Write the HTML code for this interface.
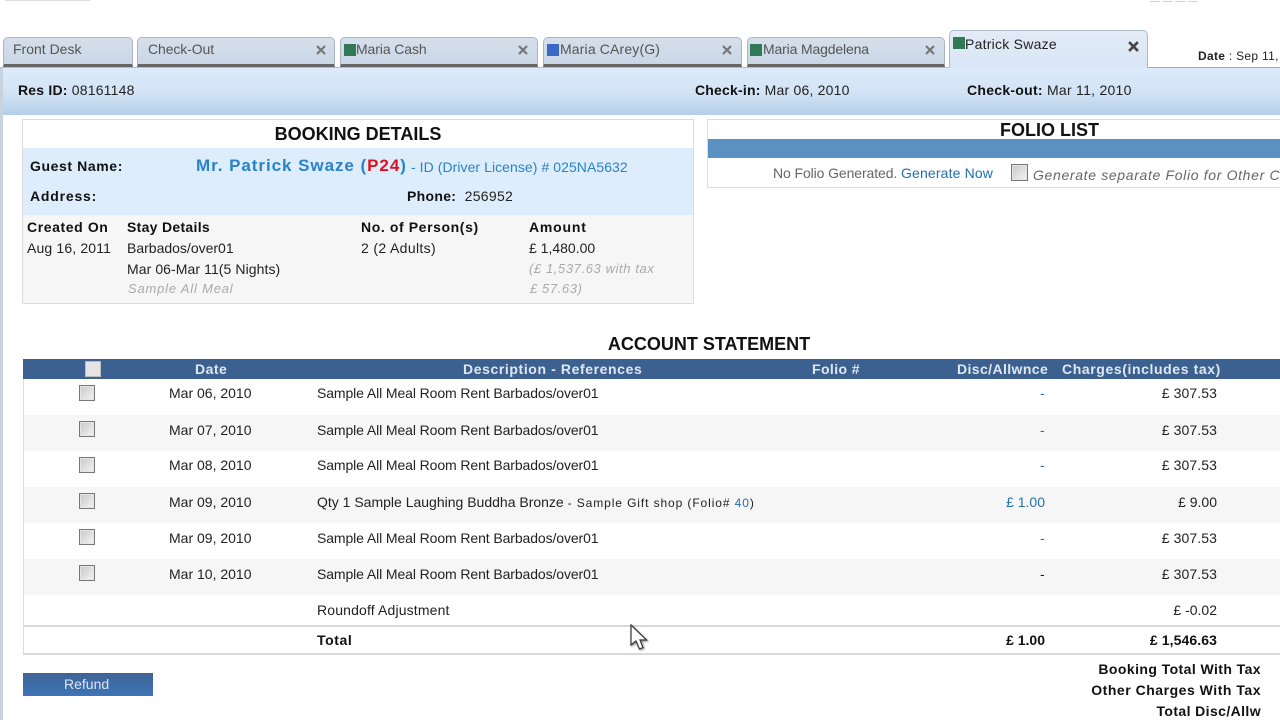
<!DOCTYPE html>
<html><head><meta charset="utf-8"><style>
html,body{margin:0;padding:0;width:1280px;height:720px;overflow:hidden;background:#fff;font-family:"Liberation Sans",sans-serif;font-size:14px;color:#222}
.a{position:absolute;white-space:nowrap;line-height:16px}
.r{text-align:right}
.c{text-align:center}
b,.b{font-weight:bold;color:#111}
.tab{position:absolute;top:37px;height:30px;box-sizing:border-box;border:1px solid #aab4c2;border-bottom:3px solid #666;border-radius:5px 5px 0 0;background:linear-gradient(#d6e0ec,#cad6e6);color:#555}
.tab span{position:absolute;top:3px;white-space:nowrap;line-height:16px}
.x{position:absolute;top:7px;width:10px;height:10px}
.sq{position:absolute;top:6px;left:3px;width:12px;height:12px;background:#2f7a55}
.cb{position:absolute;width:16px;height:16px;box-sizing:border-box;border:1px solid #777;background:linear-gradient(135deg,#c8c8c8,#f4f4f4);box-shadow:inset 0 0 0 1px #e4e4e4}
.row{position:absolute;left:23px;width:1257px;height:36px}
.g{background:#f6f6f6}
.bl{color:#1f6fae}
.h{font-weight:bold;color:#dfe8f2}
.t{letter-spacing:-.1px}
.i{font-size:13px;font-style:italic;color:#aaa;letter-spacing:.6px}
</style></head><body>
<div class="a" style="left:5px;top:0;width:85px;height:1px;background:#ddd"></div>
<div class="a" style="left:1150px;top:0;color:#bbb;font-size:10px;line-height:3px;height:3px;overflow:hidden">&#8212; &#8212; &#8212; &#8212;</div>

<div class="tab" style="left:3px;width:130px"><span style="left:9px">Front Desk</span></div>
<div class="tab" style="left:137px;width:198px"><span style="left:10px;letter-spacing:-.1px">Check-Out</span><svg class="x" style="left:178px" viewBox="0 0 10 10"><path d="M1 1L9 9M9 1L1 9" stroke="#777" stroke-width="2.2"/></svg></div>
<div class="tab" style="left:340px;width:198px"><i class="sq" style="left:3px"></i><span style="left:15px;letter-spacing:-.1px">Maria Cash</span><svg class="x" style="left:177px" viewBox="0 0 10 10"><path d="M1 1L9 9M9 1L1 9" stroke="#777" stroke-width="2.2"/></svg></div>
<div class="tab" style="left:543px;width:199px"><i class="sq" style="left:3px;background:#3a68c8"></i><span style="left:16px;letter-spacing:.15px">Maria CArey(G)</span><svg class="x" style="left:178px" viewBox="0 0 10 10"><path d="M1 1L9 9M9 1L1 9" stroke="#777" stroke-width="2.2"/></svg></div>
<div class="tab" style="left:747px;width:198px"><i class="sq" style="left:2px"></i><span style="left:15px;letter-spacing:-.15px">Maria Magdelena</span><svg class="x" style="left:177px" viewBox="0 0 10 10"><path d="M1 1L9 9M9 1L1 9" stroke="#777" stroke-width="2.2"/></svg></div>
<div class="a" style="left:0;top:67px;width:950px;height:1px;background:#bbb"></div>
<div class="a" style="left:1148px;top:67px;width:132px;height:1px;background:#aaa"></div>
<div class="a" style="left:949px;top:30px;width:199px;height:38px;box-sizing:border-box;border:1px solid #b0bac6;border-bottom:0;border-radius:5px 5px 0 0;background:linear-gradient(#e2ebf6,#d9e6f6)">
<i class="sq" style="top:6px;left:3px"></i><span class="a" style="left:15px;top:5px;color:#222;letter-spacing:.25px">Patrick Swaze</span>
<svg class="x" style="left:178px;top:10px;width:11px;height:11px" viewBox="0 0 10 10"><path d="M1 1L9 9M9 1L1 9" stroke="#444" stroke-width="2.4"/></svg></div>
<div class="a" style="left:1198px;top:48px;font-size:12px;letter-spacing:.3px"><b style="color:#222">Date</b> : Sep 11,</div>

<div class="a" style="left:0;top:68px;width:3px;height:652px;background:#c9d3df"></div>
<div class="a" style="left:3px;top:68px;width:1277px;height:47px;background:linear-gradient(#dceafa,#d4e4f6 50%,#b4cfe8)"></div>
<div class="a" style="left:18px;top:82px;letter-spacing:.2px"><b>Res ID:</b> 08161148</div>
<div class="a" style="left:695px;top:82px;letter-spacing:.2px"><b>Check-in:</b> Mar 06, 2010</div>
<div class="a" style="left:967px;top:82px;letter-spacing:.27px"><b>Check-out:</b> Mar 11, 2010</div>

<div class="a" style="left:22px;top:119px;width:672px;height:185px;box-sizing:border-box;border:1px solid #dcdcdc;background:#fff"></div>
<div class="a" style="left:23px;top:148px;width:670px;height:67px;background:#ddedfb"></div>
<div class="a" style="left:23px;top:215px;width:670px;height:88px;background:#f6f6f6"></div>
<div class="a c" style="left:23px;top:124px;width:670px;font-size:18px;font-weight:bold;color:#111;line-height:20px">BOOKING DETAILS</div>
<div class="a" style="left:30px;top:158px;letter-spacing:.6px"><b>Guest Name:</b></div>
<div class="a" style="left:196px;top:156px;font-size:17px;line-height:20px;font-weight:bold;letter-spacing:.95px;color:#2a82c9">Mr. Patrick Swaze (<span style="color:#e01020">P24</span>)</div>
<div class="a" style="left:411px;top:159px;color:#2a82c9;letter-spacing:.06px">- ID (Driver License) # 025NA5632</div>
<div class="a" style="left:30px;top:188px;letter-spacing:.8px"><b>Address:</b></div>
<div class="a" style="left:407px;top:188px;letter-spacing:.3px"><b>Phone:</b>&nbsp; 256952</div>
<div class="a" style="left:27px;top:219px;letter-spacing:.6px"><b>Created On</b></div>
<div class="a" style="left:127px;top:219px;letter-spacing:.3px"><b>Stay Details</b></div>
<div class="a" style="left:361px;top:219px;letter-spacing:.6px"><b>No. of Person(s)</b></div>
<div class="a" style="left:529px;top:219px;letter-spacing:.8px"><b>Amount</b></div>
<div class="a" style="left:27px;top:240px;letter-spacing:.15px">Aug 16, 2011</div>
<div class="a" style="left:127px;top:240px">Barbados/over01</div>
<div class="a" style="left:361px;top:240px;letter-spacing:.35px">2 (2 Adults)</div>
<div class="a" style="left:529px;top:240px">£ 1,480.00</div>
<div class="a" style="left:127px;top:261px;letter-spacing:.08px">Mar 06-Mar 11(5 Nights)</div>
<div class="a i" style="left:529px;top:261px">(£ 1,537.63 with tax</div>
<div class="a i" style="left:128px;top:281px;letter-spacing:.8px">Sample All Meal</div>
<div class="a i" style="left:530px;top:281px">£ 57.63)</div>

<div class="a" style="left:707px;top:119px;width:573px;height:69px;box-sizing:border-box;border:1px solid #dcdcdc;border-right:0;background:#fff"></div>
<div class="a" style="left:708px;top:139px;width:572px;height:19px;background:#5b91c1"></div>
<div class="a" style="left:1000px;top:121px;font-size:18px;line-height:19px;font-weight:bold;color:#111">FOLIO LIST</div>
<div class="a" style="left:773px;top:165px;color:#666;letter-spacing:-.1px">No Folio Generated.</div>
<div class="a bl" style="left:901px;top:165px;letter-spacing:.15px">Generate Now</div>
<div class="cb" style="left:1011px;top:164px;width:17px;height:17px"></div>
<div class="a" style="left:1033px;top:167px;font-style:italic;letter-spacing:.66px;color:#666">Generate separate Folio for Other Charges</div>

<div class="a c" style="left:23px;top:334px;width:1372px;font-size:18px;font-weight:bold;color:#111;line-height:20px">ACCOUNT STATEMENT</div>
<div class="a" style="left:23px;top:359px;width:1257px;height:20px;background:#3c6190"></div>
<div class="cb" style="left:85px;top:361px;border-color:#bbb;background:#e4e4e4"></div>
<div class="a h" style="left:195px;top:361px;letter-spacing:.5px">Date</div>
<div class="a h" style="left:463px;top:361px;letter-spacing:.6px">Description - References</div>
<div class="a h" style="left:812px;top:361px;letter-spacing:.4px">Folio #</div>
<div class="a h" style="left:957px;top:361px;letter-spacing:.4px">Disc/Allwnce</div>
<div class="a h" style="left:1062px;top:361px;letter-spacing:.6px">Charges(includes tax)</div>

<div class="row g" style="top:415px"></div>
<div class="row g" style="top:487px"></div>
<div class="row g" style="top:559px"></div>

<div class="cb" style="left:79px;top:385px"></div><div class="a" style="left:169px;top:385px">Mar 06, 2010</div><div class="a t" style="left:317px;top:385px">Sample All Meal Room Rent Barbados/over01</div><div class="a bl" style="left:1040px;top:385px">-</div><div class="a r" style="right:63px;top:385px;letter-spacing:.1px">£ 307.53</div>
<div class="cb" style="left:79px;top:421px"></div><div class="a" style="left:169px;top:422px">Mar 07, 2010</div><div class="a t" style="left:317px;top:422px">Sample All Meal Room Rent Barbados/over01</div><div class="a bl" style="left:1040px;top:422px">-</div><div class="a r" style="right:63px;top:422px;letter-spacing:.1px">£ 307.53</div>
<div class="cb" style="left:79px;top:457px"></div><div class="a" style="left:169px;top:457px">Mar 08, 2010</div><div class="a t" style="left:317px;top:457px">Sample All Meal Room Rent Barbados/over01</div><div class="a bl" style="left:1040px;top:457px">-</div><div class="a r" style="right:63px;top:457px;letter-spacing:.1px">£ 307.53</div>
<div class="cb" style="left:79px;top:493px"></div><div class="a" style="left:169px;top:494px">Mar 09, 2010</div><div class="a" style="left:317px;top:494px">Qty 1 Sample Laughing Buddha Bronze <span style="font-size:12px;letter-spacing:.9px">- Sample Gift shop (Folio# <span class="bl">40</span>)</span></div><div class="a bl r" style="right:235px;top:494px">£ 1.00</div><div class="a r" style="right:63px;top:494px">£ 9.00</div>
<div class="cb" style="left:79px;top:529px"></div><div class="a" style="left:169px;top:530px">Mar 09, 2010</div><div class="a t" style="left:317px;top:530px">Sample All Meal Room Rent Barbados/over01</div><div class="a bl" style="left:1040px;top:530px">-</div><div class="a r" style="right:63px;top:530px;letter-spacing:.1px">£ 307.53</div>
<div class="cb" style="left:79px;top:565px"></div><div class="a" style="left:169px;top:566px">Mar 10, 2010</div><div class="a t" style="left:317px;top:566px">Sample All Meal Room Rent Barbados/over01</div><div class="a" style="left:1040px;top:566px">-</div><div class="a r" style="right:63px;top:566px;letter-spacing:.1px">£ 307.53</div>
<div class="a" style="left:317px;top:602px;letter-spacing:.15px">Roundoff Adjustment</div><div class="a r" style="right:63px;top:602px">£ -0.02</div>

<div class="a" style="left:23px;top:379px;width:1px;height:275px;background:#ddd"></div>
<div class="a" style="left:23px;top:625px;width:1257px;height:2px;background:#d8d8d8"></div>
<div class="a" style="left:23px;top:653px;width:1257px;height:2px;background:#d8d8d8"></div>
<div class="a" style="left:317px;top:632px;letter-spacing:.6px"><b>Total</b></div>
<div class="a r" style="right:235px;top:632px"><b>£ 1.00</b></div>
<div class="a r" style="right:63px;top:632px;letter-spacing:.1px"><b>£ 1,546.63</b></div>

<svg class="a" style="left:630px;top:624px;filter:drop-shadow(1px 1px 1px rgba(0,0,0,.45))" width="20" height="28" viewBox="0 0 20 28"><path d="M1 1V21L6 17L9.500 25L13 23.500L10 16H16.500Z" fill="#fff" stroke="#333" stroke-width="1.200"/></svg>

<div class="a" style="left:23px;top:673px;width:130px;height:23px;background:linear-gradient(#3e6494,#3f74b8)"></div>
<div class="a" style="left:64px;top:676px;color:#dbe6f2">Refund</div>
<div class="a r" style="right:19px;top:661px;letter-spacing:.42px"><b>Booking Total With Tax</b></div>
<div class="a r" style="right:19px;top:682px;letter-spacing:.52px"><b>Other Charges With Tax</b></div>
<div class="a r" style="right:19px;top:703px;letter-spacing:.4px"><b>Total Disc/Allw</b></div>
</body></html>
